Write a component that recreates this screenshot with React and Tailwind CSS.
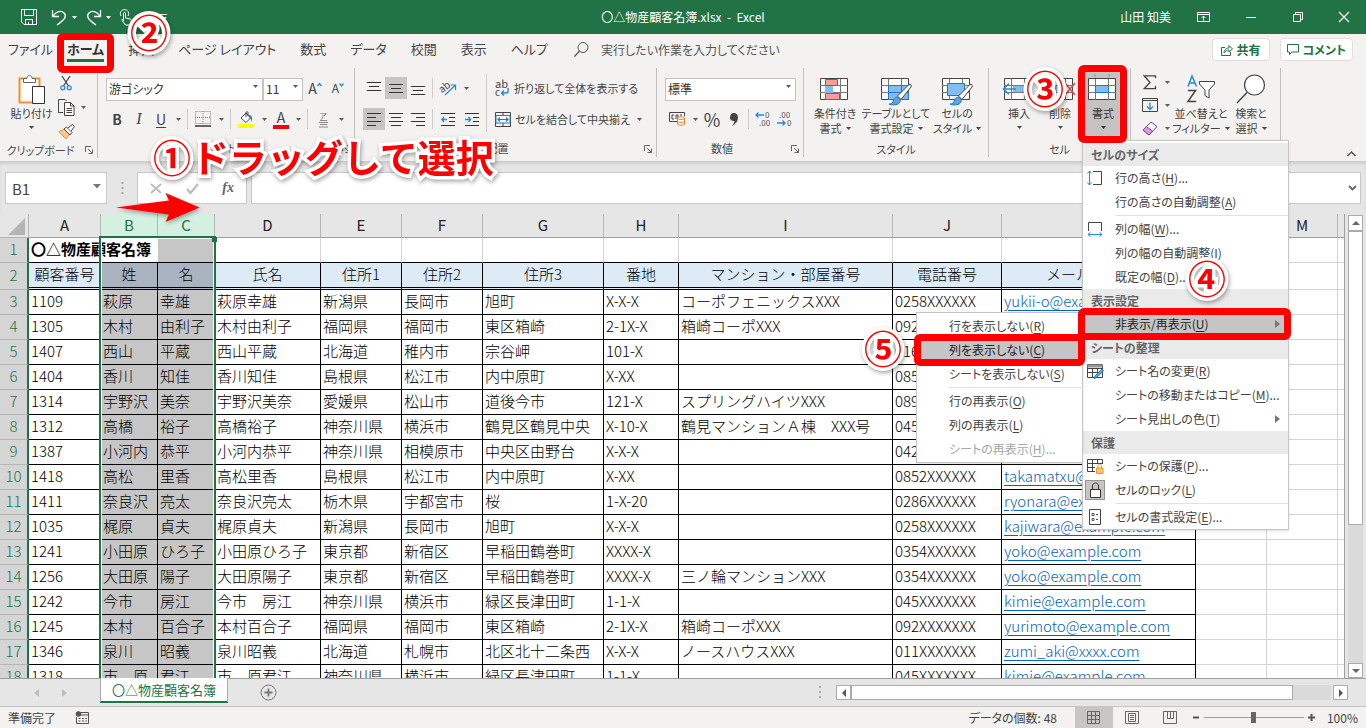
// src/App.jsx
import React, { useState } from 'react'
import clsx from 'clsx'

const TABS = ['ファイル', 'ホーム', '挿入', 'ページ レイアウト', '数式', 'データ', '校閲', '表示', 'ヘルプ'];

const COLUMNS = [
  { id: 'A', width: 72 },
  { id: 'B', width: 57 },
  { id: 'C', width: 57 },
  { id: 'D', width: 106 },
  { id: 'E', width: 81 },
  { id: 'F', width: 81 },
  { id: 'G', width: 121 },
  { id: 'H', width: 75 },
  { id: 'I', width: 214 },
  { id: 'J', width: 109 },
  { id: 'K', width: 194 },
  { id: 'L', width: 71 },
  { id: 'M', width: 71 },
  { id: '', width: null },
];

const HEADINGS = ['顧客番号', '姓', '名', '氏名', '住所1', '住所2', '住所3', '番地', 'マンション・部屋番号', '電話番号', 'メールアドレス'];

const CUSTOMERS = [
  ['1109', '萩原', '幸雄', '萩原幸雄', '新潟県', '長岡市', '旭町', 'X-X-X', 'コーポフェニックスXXX', '0258XXXXXX', 'yukii-o@example.com'],
  ['1305', '木村', '由利子', '木村由利子', '福岡県', '福岡市', '東区箱崎', '2-1X-X', '箱崎コーポXXX', '092XXXXXXX', ''],
  ['1407', '西山', '平蔵', '西山平蔵', '北海道', '稚内市', '宗谷岬', '101-X', '', '016XXXXXXX', ''],
  ['1404', '香川', '知佳', '香川知佳', '島根県', '松江市', '内中原町', 'X-XX', '', '0852XXXXXX', ''],
  ['1314', '宇野沢', '美奈', '宇野沢美奈', '愛媛県', '松山市', '道後今市', '121-X', 'スプリングハイツXXX', '089XXXXXXX', ''],
  ['1312', '高橋', '裕子', '高橋裕子', '神奈川県', '横浜市', '鶴見区鶴見中央', 'X-10-X', '鶴見マンションＡ棟　XXX号', '045XXXXXXX', ''],
  ['1387', '小河内', '恭平', '小河内恭平', '神奈川県', '相模原市', '中央区由野台', 'X-X-X', '', '042XXXXXXX', ''],
  ['1418', '高松', '里香', '高松里香', '島根県', '松江市', '内中原町', 'X-XX', '', '0852XXXXXX', 'takamatxu@example.com'],
  ['1411', '奈良沢', '亮太', '奈良沢亮太', '栃木県', '宇都宮市', '桜', '1-X-20', '', '0286XXXXXX', 'ryonara@example.com'],
  ['1035', '梶原', '貞夫', '梶原貞夫', '新潟県', '長岡市', '旭町', 'X-X-X', '', '0258XXXXXX', 'kajiwara@example.com'],
  ['1241', '小田原', 'ひろ子', '小田原ひろ子', '東京都', '新宿区', '早稲田鶴巻町', 'XXXX-X', '', '0354XXXXXX', 'yoko@example.com'],
  ['1256', '大田原', '陽子', '大田原陽子', '東京都', '新宿区', '早稲田鶴巻町', 'XXXX-X', '三ノ輪マンションXXX', '0354XXXXXX', 'yoko@example.com'],
  ['1242', '今市', '房江', '今市　房江', '神奈川県', '横浜市', '緑区長津田町', '1-1-X', '', '045XXXXXXX', 'kimie@example.com'],
  ['1245', '本村', '百合子', '本村百合子', '福岡県', '福岡市', '東区箱崎', '2-1X-X', '箱崎コーポXXX', '092XXXXXXX', 'yurimoto@example.com'],
  ['1346', '泉川', '昭義', '泉川昭義', '北海道', '札幌市', '北区北十二条西', 'X-X-X', 'ノースハウスXXX', '011XXXXXXX', 'zumi_aki@xxxx.com'],
  ['1318', '市　原', '君江', '市　原君江', '神奈川県', '横浜市', '緑区長津田町', '1-1-X', '', '045XXXXXXX', 'kimie@example.com'],
];

/* ---------- small helpers ---------- */

function Svg({ w, h, children, className }) {
  return (
    <svg width={w} height={h} viewBox={`0 0 ${w} ${h}`} fill="none" aria-hidden="true" className={clsx('shrink-0 overflow-visible', className)}>
      {children}
    </svg>
  );
}

function Caret({ className }) {
  return (
    <Svg w={5} h={3} className={className}>
      <path d="M0 0h5L2.5 3z" fill="currentColor" />
    </Svg>
  );
}

function Drop({ label }) {
  return (
    <button type="button" aria-label={label} className="w-3 h-[22px] flex items-center justify-center text-[#5a5a5a]">
      <Caret />
    </button>
  );
}

function Tool({ label, active, wide, children }) {
  return (
    <button
      type="button"
      aria-label={label}
      className={clsx('h-[22px] flex items-center justify-center shrink-0', wide ? 'w-6' : 'w-[22px]', active && 'bg-[#c8c6c4]')}
    >
      {children}
    </button>
  );
}

function Sep() {
  return <span className="w-px h-5 mx-[3px] bg-[#d0cecc]" />;
}

function Big({ icon, lines, className, caretBelow }) {
  return (
    <button type="button" className={clsx('h-[68px] flex flex-col items-center text-[11px] leading-[15px] whitespace-nowrap', className)}>
      <span className="h-[34px] flex items-center">{icon}</span>
      <span>{lines[0]}</span>
      {caretBelow ? (
        <span className="h-3 flex items-center"><Caret /></span>
      ) : (
        <span className="flex items-center gap-1">{lines[1]}<Caret /></span>
      )}
    </button>
  );
}

function Group({ label, launcher, className, children }) {
  return (
    <section aria-label={label} className={clsx('shrink-0 h-[93px] flex flex-col', className)}>
      <div className="flex-1 flex border-r border-[#c2c0be] pt-1">{children}</div>
      <div className={clsx('h-[18px] relative flex items-center justify-center text-[11px] text-[#4a4a4a] border-r border-[#c2c0be] mb-1 leading-4', launcher && 'pr-4')}>
        {label}
        {launcher && (
          <button type="button" aria-label={`${label}の設定`} className="absolute right-1 bottom-1">
            <Svg w={8} h={8}>
              <path d="M.5 6V.5H6M3 3l4 4M7.5 3.5v4h-4" stroke="#666" />
            </Svg>
          </button>
        )}
      </div>
    </section>
  );
}

function Frame({ className }) {
  return <span className={clsx('absolute border-[7px] border-[#ff0000] rounded-md pointer-events-none z-20', className)} />;
}

function Callout({ className, children }) {
  return (
    <span
      className={clsx(
        "absolute z-40 text-[38px] leading-[38px] font-bold text-[#ff0000] whitespace-nowrap pointer-events-none font-['Noto_Sans_CJK_JP',sans-serif] [font-feature-settings:normal] [-webkit-text-stroke:7px_white] [paint-order:stroke_fill] [filter:drop-shadow(1px_2px_2px_rgba(0,0,0,0.35))]",
        className
      )}
    >
      {children}
    </span>
  );
}

/* ---------- icons ---------- */

function Lines({ rows }) {
  return (
    <Svg w={14} h={13}>
      {rows.map(([y, x1, x2]) => (
        <path key={y} d={`M${x1} ${y}H${x2}`} stroke="#333" />
      ))}
    </Svg>
  );
}

function GridIcon({ children }) {
  return (
    <Svg w={32} h={30}>
      <path d="M1.5 4.500h27v21h-27z" fill="#fff" stroke="#444" />
      <path d="M1 11.500h28M1 18.500h28M8.500 5v21M21.500 5v21" stroke="#777" />
      {children}
    </Svg>
  );
}

const Brush = () => (
  <>
    <path d="M29 10.500L17.500 22l3.500 3.500L31 13c1-1.500-.5-3.500-2-2.500z" fill="#fff" stroke="#444" />
    <path d="M9 30c3 .5 4-2 4.500-4s3-4 5.500-2 1 5-1 6-6 1.500-9 0z" fill="#5ba5dc" stroke="#1e7ac4" />
  </>
);

const PasteIcon = () => (
  <Svg w={28} h={30}>
    <path d="M1.500 4.500h20v24h-20z" fill="#fdf3e6" stroke="#e8953a" strokeWidth="2" />
    <path d="M4.500 7.500h14v18h-14z" fill="#fff" />
    <path d="M5.500 8.500v-4h3.500c0-4 5-4 5 0h3.500v4z" fill="#fff" stroke="#666" />
    <path d="M14.500 12.500h12v17h-12z" fill="#fff" stroke="#333" />
  </Svg>
);

const CutIcon = () => (
  <Svg w={12} h={16}>
    <path d="M2 1l6.500 10M10 1L3.500 11" stroke="#444" strokeWidth="1.300" />
    <circle cx="2.800" cy="12.800" r="2" stroke="#2b88d8" strokeWidth="1.300" />
    <circle cx="9.200" cy="12.800" r="2" stroke="#2b88d8" strokeWidth="1.300" />
  </Svg>
);

const CopyIcon = () => (
  <Svg w={17} h={17}>
    <path d="M5 13.500H.500V.500h6.500L8.500 2" stroke="#444" />
    <path d="M6.500 3.500h6l3.500 3.500v9.500H6.500z" fill="#fff" stroke="#444" />
    <path d="M12.500 3.500V7H16M8.500 9.500H14M8.500 11.500H14M8.500 13.500H14" stroke="#444" />
  </Svg>
);

const PainterIcon = () => (
  <Svg w={17} h={15}>
    <path d="M.8 7.500l6-2.500 5 5-4 5z" fill="#fbc98a" stroke="#e8953a" />
    <path d="M6 5l2.500-2 5.500 5.500-2 2.500z" fill="#fff" stroke="#444" />
    <path d="M10 4l4.500-3.500 2 2L13 7" fill="#fff" stroke="#444" />
  </Svg>
);

const BorderIcon = () => (
  <Svg w={16} h={16}>
    <path d="M.5 .5h15v12H.5zM8 0v13M0 6.500h16" stroke="#888" strokeDasharray="1 1" />
    <path d="M0 15h16" stroke="#333" strokeWidth="1.500" />
  </Svg>
);

const FillIcon = () => (
  <Svg w={16} h={17}>
    <path d="M3 7l5-5 4.500 5L8 11.500z" fill="#fff" stroke="#444" />
    <path d="M8 6V1.500c0-1 2-1 2 0V5" stroke="#444" />
    <path d="M11 4c3 0 3.500 3 3 7-1-2-1-3.500-3-5z" fill="#1e7ac4" />
    <path d="M0 13h16v4H0z" fill="#ffff00" />
  </Svg>
);

const OrientIcon = () => (
  <Svg w={18} h={16}>
    <text x="0" y="11" fontSize="10" fill="#444" transform="rotate(-40 5 8)">ab</text>
    <path d="M6 15L16 5.500M11.500 5H16.500V10" stroke="#2b88d8" strokeWidth="1.200" />
  </Svg>
);

const IndentIcon = ({ out }) => (
  <Svg w={15} h={13}>
    <path d="M0 .5h14M8 4.500h6M8 8.500h6M0 12.500h14" stroke="#333" />
    <path d={out ? 'M6 6.500H1M3 4L.8 6.500 3 9' : 'M0 6.500h5.500M3.500 4l2.200 2.500L3.500 9'} stroke="#2b88d8" strokeWidth="1.300" />
  </Svg>
);

const WrapIcon = () => (
  <Svg w={15} h={16}>
    <text x="0" y="8" fontSize="11" fill="#444">ab</text>
    <text x="0" y="16" fontSize="10" fill="#444">c</text>
    <path d="M13 8v3.500c0 1-1 1.500-2 1.500H7M9 10.500L6.500 13 9 15.500" stroke="#2b88d8" strokeWidth="1.400" />
  </Svg>
);

const MergeIcon = () => (
  <Svg w={16} h={15}>
    <path d="M.5 .5h15v14H.5zM8 0v4M8 11v4" stroke="#444" />
    <path d="M1 3.500h14v7.500H1z" fill="#fff" stroke="#1e7ac4" />
    <path d="M3 7.500h10M5 5.500L3 7.500l2 2M11 5.500l2 2-2 2" stroke="#1e7ac4" strokeWidth="1.200" />
  </Svg>
);

const CurrencyIcon = () => (
  <Svg w={17} h={14}>
    <path d="M9 9.500H.5v-9h15V4" stroke="#444" />
    <path d="M5 3H3v4h2M7 7V3h2v3M11 3h2" stroke="#444" />
    <path d="M8.500 6c0-1.500 7-1.500 7 0v6c0 1.500-7 1.500-7 0z" fill="#fff" stroke="#e8792a" />
    <path d="M8.500 6.500c0 1.200 7 1.200 7 0M8.500 9.500c0 1.200 7 1.200 7 0" stroke="#e8792a" />
  </Svg>
);

const DecimalIcon = ({ less }) => (
  <Svg w={17} h={16}>
    <text x={less ? 2 : 10} y="7" fontSize="8" fill="#555">{less ? '.00' : '0'}</text>
    <text x={less ? 10 : 4} y="15" fontSize="8" fill="#555">{less ? '0' : '.00'}</text>
    <path d={less ? 'M0 12h8M5.500 9.500L8 12l-2.500 2.500' : 'M9 4H1M3.500 1.500L1 4l2.500 2.500'} stroke="#2b88d8" strokeWidth="1.300" />
  </Svg>
);

const CondIcon = () => (
  <GridIcon>
    <path d="M6.500 5.500h12v6h-12zM6.500 19.500h14v6h-14z" fill="#ff9a9a" stroke="#d83b3b" />
    <path d="M6 12h8v7H6z" fill="#83bdf0" />
  </GridIcon>
);

const InsertIcon = () => (
  <GridIcon>
    <path d="M10 12h19v6H10z" fill="#83bdf0" />
    <path d="M13 15H1M6 9.500L.5 15 6 20.500" stroke="#2b88d8" strokeWidth="1.500" />
  </GridIcon>
);

const DeleteIcon = () => (
  <GridIcon>
    <path d="M1 12h12v6H1z" fill="#83bdf0" />
    <path d="M21 9l10 12M31 9L21 21" stroke="#e04848" strokeWidth="1.500" />
  </GridIcon>
);

const FormatIcon = () => (
  <GridIcon>
    <path d="M8.500 11.500h13v7h-13z" fill="#83bdf0" stroke="#1e7ac4" />
    <path d="M8 .5v2M22 .5v2" stroke="#2b88d8" />
  </GridIcon>
);

const SumIcon = () => (
  <Svg w={14} h={15}>
    <path d="M12.500 3V.8H1.200L7 7.500l-5.800 6.200h11.300V11" stroke="#444" strokeWidth="1.300" />
  </Svg>
);

const FillDownIcon = () => (
  <Svg w={16} h={14}>
    <path d="M.5 .5h15v13H.5zM0 2.500h16" stroke="#444" />
    <path d="M8 4.500v7M5 8.500l3 3 3-3" stroke="#2b88d8" strokeWidth="1.300" />
  </Svg>
);

const EraserIcon = () => (
  <Svg w={16} h={15}>
    <path d="M1 9l8-8 6 4.500-8 8.500z" fill="#fff" stroke="#8a3c9c" />
    <path d="M1 9l3.500-3.500 6 4.500L7 14z" fill="#d9a0e0" stroke="#8a3c9c" />
  </Svg>
);

const SortIcon = () => (
  <Svg w={30} h={30}>
    <path d="M2 12.500L6 2l4.500 10.500M3.500 9h5.500" stroke="#2b88d8" strokeWidth="1.500" />
    <path d="M2 16.500h7.500L2 27.500h8" stroke="#444" strokeWidth="1.500" />
    <path d="M13.500 7.500h15v2.500l-5.500 6v8l-4-2.500V16l-5.500-6z" fill="#fff" stroke="#444" />
  </Svg>
);

const FindIcon = () => (
  <Svg w={30} h={30}>
    <circle cx="18.500" cy="11" r="10" fill="#fff" stroke="#444" strokeWidth="1.200" />
    <path d="M11 18.500L1 29" stroke="#444" strokeWidth="1.400" />
  </Svg>
);

const RowHeightIcon = () => (
  <Svg w={16} h={16}>
    <path d="M6 1.500h8.500v13H6" stroke="#444" />
    <path d="M2.500 1v14M.3 3.500L2.500 1l2.200 2.500M.3 12.500L2.500 15l2.200-2.500" stroke="#2b88d8" />
  </Svg>
);

const ColWidthIcon = () => (
  <Svg w={16} h={16}>
    <path d="M1.500 10V1.500h13V10" stroke="#444" />
    <path d="M1 13.500h14M3.500 11.300L1 13.500l2.500 2.200M12.500 11.300l2.500 2.200-2.500 2.200" stroke="#2b88d8" />
  </Svg>
);

const RenameIcon = () => (
  <Svg w={17} h={16}>
    <path d="M.5 1.500h15v13H.5zM0 5.500h16M0 9.500h16M5.500 5v10M10.500 5v10" stroke="#444" />
    <path d="M.5 1.500h15v3H.5z" fill="#999" />
    <path d="M15 6l-7 7-1 2.500 2.500-1L16.500 8z" fill="#5ba5dc" stroke="#1e7ac4" />
  </Svg>
);

const ProtectIcon = () => (
  <Svg w={17} h={16}>
    <path d="M8 13.500H.5V1.500h15V6M0 5.500h16M0 9.500h8M5.500 1v13M10.500 1v5" stroke="#444" />
    <path d="M9.500 10h6.500v5.500H9.500z" fill="#ffc766" stroke="#e8953a" />
    <path d="M11 10V8c0-2 3.500-2 3.500 0v2" stroke="#e8953a" />
  </Svg>
);

const LockIcon = () => (
  <span className="w-5 h-5 shrink-0 bg-[#c8c6c4] border border-[#979593] flex items-center justify-center">
    <Svg w={13} h={16}>
      <path d="M1.500 7.500h10v8h-10z" fill="#fff" stroke="#333" />
      <path d="M3.500 7.500V4c0-4 6-4 6 0v3.500" stroke="#333" />
    </Svg>
  </span>
);

const CellFormatIcon = () => (
  <Svg w={12} h={16}>
    <path d="M.5 .5h11v15H.5z" fill="#fff" stroke="#444" />
    <path d="M3 4.500h2v2H3zM3 9.500h2v2H3zM7 5.500h2M7 10.500h2" stroke="#555" />
  </Svg>
);

/* ---------- menus ---------- */

function MenuHeader({ children }) {
  return <li role="presentation" className="h-[23px] bg-[#eaeaea] px-2 flex items-center font-bold text-[#666]">{children}</li>;
}

function MenuItem({ icon, text, hotkey, dots, more, active, disabled, children }) {
  return (
    <li role="none" className="relative">
      <button
        type="button"
        role="menuitem"
        disabled={disabled}
        className={clsx(
          'w-full h-6 flex items-center text-left whitespace-nowrap',
          active ? 'bg-[#c5c5c5] text-[#222]' : disabled ? 'text-[#a5a5a5]' : 'text-[#444]'
        )}
      >
        <span className="w-8 shrink-0 flex justify-center pr-2">{icon}</span>
        <span className="flex-1">{text}(<span className="underline underline-offset-2">{hotkey}</span>){dots && '...'}</span>
        {more && (
          <Svg w={5} h={8} className="mr-2"><path d="M0 0l5 4-5 4z" fill="#777" /></Svg>
        )}
      </button>
      {children}
    </li>
  );
}

const MenuSep = () => <li role="separator" className="h-px my-px ml-8 bg-[#e1e1e1]" />;

function HideMenu() {
  return (
    <ul role="menu" className="absolute right-full top-0 w-[167px] py-px bg-white border border-[#c6c6c6] shadow">
      <MenuItem text="行を表示しない" hotkey="R" />
      <MenuItem text="列を表示しない" hotkey="C" active>
        <Frame className="-left-[3px] -right-[3px] -top-1 -bottom-1" />
      </MenuItem>
      <MenuItem text="シートを表示しない" hotkey="S" />
      <MenuSep />
      <MenuItem text="行の再表示" hotkey="O" />
      <MenuItem text="列の再表示" hotkey="L" />
      <MenuItem text="シートの再表示" hotkey="H" dots disabled />
    </ul>
  );
}

function FormatMenu() {
  return (
    <ul role="menu" className="absolute z-30 top-[68px] -left-[3px] w-[207px] pt-0.5 bg-white border border-[#c6c6c6] shadow text-xs">
      <MenuHeader>セルのサイズ</MenuHeader>
      <MenuItem icon={<RowHeightIcon />} text="行の高さ" hotkey="H" dots />
      <MenuItem text="行の高さの自動調整" hotkey="A" />
      <MenuSep />
      <MenuItem icon={<ColWidthIcon />} text="列の幅" hotkey="W" dots />
      <MenuItem text="列の幅の自動調整" hotkey="I" />
      <MenuItem text="既定の幅" hotkey="D" dots />
      <MenuHeader>表示設定</MenuHeader>
      <MenuItem text="非表示/再表示" hotkey="U" more active>
        <HideMenu />
        <Frame className="-left-[5px] -right-[3px] -top-1 -bottom-1" />
      </MenuItem>
      <MenuHeader>シートの整理</MenuHeader>
      <MenuItem icon={<RenameIcon />} text="シート名の変更" hotkey="R" />
      <MenuItem text="シートの移動またはコピー" hotkey="M" dots />
      <MenuItem text="シート見出しの色" hotkey="T" more />
      <MenuHeader>保護</MenuHeader>
      <MenuItem icon={<ProtectIcon />} text="シートの保護" hotkey="P" dots />
      <MenuItem icon={<LockIcon />} text="セルのロック" hotkey="L" />
      <MenuSep />
      <MenuItem icon={<CellFormatIcon />} text="セルの書式設定" hotkey="E" dots />
    </ul>
  );
}

/* ---------- window parts ---------- */

function TitleBar() {
  return (
    <header className="h-[34px] shrink-0 bg-[#217346] text-white text-xs flex items-center relative">
      <div className="flex items-center pl-[21px]">
        <button type="button" aria-label="上書き保存">
          <Svg w={16} h={16}>
            <path d="M.5 .5h15v15H3L.5 13zM3.500 1v5.500h9V1M4.500 15.500v-5h7v5M7.500 15v-2" stroke="#fff" />
          </Svg>
        </button>
        <button type="button" aria-label="元に戻す" className="ml-3.5 flex items-center gap-1">
          <Svg w={17} h={17}>
            <path d="M1.500 1v6.500H8M2 7C5 2.500 10 1 13 4s1.500 6-7 12" stroke="#fff" strokeWidth="1.300" />
          </Svg>
          <Caret />
        </button>
        <button type="button" aria-label="やり直し" className="ml-2 flex items-center gap-1">
          <Svg w={17} h={17}>
            <path d="M15.500 1v6.500H9M15 7C12 2.500 7 1 4 4s-1.500 6 7 12" stroke="#fff" strokeWidth="1.300" />
          </Svg>
          <Caret />
        </button>
        <button type="button" aria-label="タッチ/マウス モードの切り替え" className="ml-2">
          <Svg w={14} h={17}>
            <path d="M4.500 12V4.500c0-1.500 2-1.500 2 0V9l4.500 1c1 .3 1.500 1 1.300 2l-.8 4H6.500L3 11.500c-.5-1 .5-1.500 1.500-.5M2 7C0 3 3 .6 5.500.6S11 3 9 7" stroke="#fff" />
          </Svg>
        </button>
        <button type="button" aria-label="クイック アクセス ツール バーのカスタマイズ" className="ml-[26px]">
          <Svg w={8} h={7}><path d="M0 .5h8M1 3.500h6L4 7z" stroke="#fff" fill="#fff" /></Svg>
        </button>
      </div>
      <h1 className="absolute inset-x-0 text-center whitespace-pre pointer-events-none [font-feature-settings:normal]">〇△物産顧客名簿.xlsx  -  Excel</h1>
      <div className="ml-auto flex items-center pr-[17px]">
        <span className="mr-[26px]">山田 知美</span>
        <button type="button" aria-label="リボンの表示オプション" className="mr-9">
          <Svg w={13} h={10}><path d="M.5 .5h12v9H.5zM0 2.500h13M6.500 8.500V4.500M4.500 6l2-2 2 2" stroke="#fff" /></Svg>
        </button>
        <button type="button" aria-label="最小化" className="mr-9">
          <Svg w={11} h={10}><path d="M0 5.500h10" stroke="#fff" /></Svg>
        </button>
        <button type="button" aria-label="元のサイズに戻す" className="mr-9">
          <Svg w={10} h={10}><path d="M.5 2.500h7v7h-7zM2.500 2V.5h7v7H8" stroke="#fff" /></Svg>
        </button>
        <button type="button" aria-label="閉じる">
          <Svg w={10} h={10}><path d="M0 0l10 10M10 0L0 10" stroke="#fff" strokeWidth="1.100" /></Svg>
        </button>
      </div>
    </header>
  );
}

function RibbonTabs() {
  const [active, setActive] = useState('ホーム');

  return (
    <nav className="h-[34px] shrink-0 flex items-start text-[13px] leading-[30px] text-[#444] pr-[13px]">
      <div className="flex">
        {TABS.map((tab) => (
          <button
            key={tab}
            type="button"
            onClick={() => setActive(tab)}
            className={clsx('relative whitespace-nowrap', tab === 'ファイル' ? 'pl-2 pr-0.5' : 'px-3', tab === active && 'font-bold text-[#333]')}
          >
            {tab}
            {tab === active && <span className="absolute left-3 right-3 bottom-0.5 h-[3px] bg-[#217346]" />}
            {tab === 'ホーム' && <Frame className="left-0.5 right-0.5 -top-px -bottom-[9px]" />}
          </button>
        ))}
      </div>
      <label className="ml-3.5 flex items-center gap-3">
        <Svg w={15} h={15}>
          <circle cx="9" cy="5.500" r="5" stroke="#555" />
          <path d="M5.500 9L.5 14.500" stroke="#555" strokeWidth="1.200" />
        </Svg>
        <input placeholder="実行したい作業を入力してください" aria-label="操作アシスト" className="w-[220px] h-[30px] bg-transparent outline-none text-xs placeholder:text-[#555] [font-feature-settings:'palt']" />
      </label>
      <div className="ml-auto mt-1 flex gap-2.5 font-bold text-xs text-[#217346]">
        <button type="button" className="h-[23px] px-2 bg-white border border-[#e1dfdd] rounded-sm flex items-center gap-1">
          <Svg w={12} h={12}>
            <path d="M4 3.500H.5v8h9V8M3 9c0-4 3-5 5-5V1.500L11.500 5 8 8V6C6 6 4 7 3 9z" stroke="#217346" />
          </Svg>
          共有
        </button>
        <button type="button" className="h-[23px] px-1.5 bg-white border border-[#e1dfdd] rounded-sm flex items-center gap-1">
          <Svg w={12} h={12}><path d="M.5 .5h11v7.500H5L2.500 10.500V8h-2z" stroke="#217346" /></Svg>
          コメント
        </button>
      </div>
    </nav>
  );
}

function SelectBox({ label, value, className }) {
  return (
    <div className={clsx('relative shrink-0', className)}>
      <select aria-label={label} defaultValue={value} className="w-full h-[23px] appearance-none bg-white border border-[#c6c4c2] px-0.5 text-xs text-[#333]">
        <option>{value}</option>
      </select>
      <Caret className="absolute right-[5px] top-[10px] text-[#5a5a5a] pointer-events-none" />
    </div>
  );
}

function Ribbon() {
  return (
    <div className="h-[93px] shrink-0 flex text-[#444] relative z-10">
      <Group label="クリップボード" launcher className="w-[98px]">
        <Big icon={<PasteIcon />} lines={['貼り付け']} caretBelow className="ml-2 w-[47px]" />
        <div className="flex flex-col gap-0.5">
          <Tool label="切り取り"><CutIcon /></Tool>
          <div className="flex"><Tool label="コピー"><CopyIcon /></Tool><Drop label="コピーのオプション" /></div>
          <Tool label="書式のコピー/貼り付け"><PainterIcon /></Tool>
        </div>
      </Group>

      <Group label="フォント" launcher className="w-[257px]">
        <div className="pl-2 pt-1 flex flex-col gap-2">
          <div className="flex items-center h-6">
            <SelectBox label="フォント" value="游ゴシック" className="w-[157px]" />
            <SelectBox label="フォント サイズ" value="11" className="w-10" />
            <Tool label="フォント サイズの拡大" wide>
              <span className="text-sm">A</span><Svg w={5} h={12}><path d="M.5 4l2-2.500 2 2.500" stroke="#2b88d8" strokeWidth="1.300" /></Svg>
            </Tool>
            <Tool label="フォント サイズの縮小">
              <span className="text-xs">A</span><Svg w={5} h={12}><path d="M.5 1.500l2 2.500 2-2.500" stroke="#2b88d8" strokeWidth="1.300" /></Svg>
            </Tool>
          </div>
          <div className="flex items-center text-sm">
            <Tool label="太字"><b>B</b></Tool>
            <Tool label="斜体"><i className="font-['Liberation_Serif',serif] text-base">I</i></Tool>
            <Tool label="下線"><u className="underline-offset-2">U</u></Tool>
            <Drop label="下線のオプション" />
            <Sep />
            <Tool label="罫線" wide><BorderIcon /></Tool>
            <Drop label="罫線のオプション" />
            <Sep />
            <Tool label="塗りつぶしの色" wide><FillIcon /></Tool>
            <Drop label="塗りつぶしのオプション" />
            <Tool label="フォントの色"><span className="w-4 leading-[15px] border-b-4 border-[#ff0000]">A</span></Tool>
            <Drop label="フォントの色のオプション" />
            <Sep />
            <Tool label="ふりがな" wide>
              <span className="flex flex-col items-center text-[#777]">
                <span className="text-[8px] leading-[9px]">ア</span>
                <Svg w={9} h={8}><path d="M1 .5h7M0 2.500h9M1 4.500h7M0 7h9" stroke="#888" /></Svg>
              </span>
            </Tool>
            <Drop label="ふりがなのオプション" />
          </div>
        </div>
      </Group>

      <Group label="配置" launcher className="w-[302px]">
        <div className="pl-2 pt-1 flex flex-col gap-2">
          <div className="flex items-center h-6">
            <Tool label="上揃え"><Lines rows={[[0.5, 0, 14], [4.5, 2, 12], [8.5, 0, 14]]} /></Tool>
            <Tool label="上下中央揃え" active><Lines rows={[[2.5, 0, 14], [6.5, 2, 12], [10.5, 0, 14]]} /></Tool>
            <Tool label="下揃え"><Lines rows={[[4.5, 0, 14], [8.5, 2, 12], [12.5, 0, 14]]} /></Tool>
            <Sep />
            <Tool label="方向" wide><OrientIcon /></Tool>
            <Drop label="方向のオプション" />
          </div>
          <div className="flex items-center">
            <Tool label="左揃え" active><Lines rows={[[0.5, 0, 14], [4.5, 0, 9], [8.5, 0, 14], [12.5, 0, 9]]} /></Tool>
            <Tool label="中央揃え"><Lines rows={[[0.5, 0, 14], [4.5, 2, 12], [8.5, 0, 14], [12.5, 2, 12]]} /></Tool>
            <Tool label="右揃え"><Lines rows={[[0.5, 0, 14], [4.5, 5, 14], [8.5, 0, 14], [12.5, 5, 14]]} /></Tool>
            <Sep />
            <Tool label="インデントを減らす" wide><IndentIcon out /></Tool>
            <Tool label="インデントを増やす" wide><IndentIcon /></Tool>
          </div>
        </div>
        <span className="w-px h-[58px] mt-0.5 ml-0.5 bg-[#d0cecc]" />
        <div className="pl-2 pt-1 flex flex-col gap-2 text-[11px] whitespace-nowrap">
          <button type="button" className="h-6 flex items-center gap-1"><WrapIcon />折り返して全体を表示する</button>
          <div className="h-[22px] flex items-center">
            <button type="button" className="flex items-center gap-1"><MergeIcon />セルを結合して中央揃え</button>
            <span className="ml-1 flex"><Drop label="結合のオプション" /></span>
          </div>
        </div>
      </Group>

      <Group label="数値" launcher className="w-[147px]">
        <div className="pl-2 pt-1 flex flex-col gap-2">
          <div className="h-6 flex items-center"><SelectBox label="数値の書式" value="標準" className="w-[131px]" /></div>
          <div className="flex items-center">
            <Tool label="通貨表示形式" wide><CurrencyIcon /></Tool>
            <Drop label="通貨のオプション" />
            <Tool label="パーセント スタイル"><span className="text-lg">%</span></Tool>
            <Tool label="桁区切りスタイル">
              <Svg w={8} h={13}><path d="M4 0C6.500 0 8 2 8 4.500 8 8 6 11 2 13c2-2.500 2.500-4 2.500-5C2 8.500 0 7 0 4.500 0 2 1.500 0 4 0z" fill="#444" /></Svg>
            </Tool>
            <Sep />
            <Tool label="小数点以下の表示桁数を増やす"><DecimalIcon /></Tool>
            <Tool label="小数点以下の表示桁数を減らす"><DecimalIcon less /></Tool>
          </div>
        </div>
      </Group>

      <Group label="スタイル" className="w-[185px]">
        <Big icon={<CondIcon />} lines={['条件付き', '書式']} className="ml-1.5 w-[50px]" />
        <Big
          icon={<GridIcon><path d="M8.500 11.500h20v14h-20z" fill="#83bdf0" stroke="#1e7ac4" /><path d="M9 18.500h19M21.500 12v13" stroke="#1e7ac4" /><Brush /></GridIcon>}
          lines={['テーブルとして', '書式設定']}
          className="w-[72px]"
        />
        <Big
          icon={<GridIcon><path d="M6.500 9.500h17v12h-17z" fill="#83bdf0" stroke="#1e7ac4" /><Brush /></GridIcon>}
          lines={['セルの', 'スタイル']}
          className="w-[50px]"
        />
      </Group>

      <Group label="セル" className="w-[142px]">
        <Big icon={<InsertIcon />} lines={['挿入']} caretBelow className="ml-2.5 w-10" />
        <Big icon={<DeleteIcon />} lines={['削除']} caretBelow className="w-[42px]" />
        <div className="relative ml-1 h-16">
          <div className="bg-[#c5c3c1] text-[#333]">
            <Big icon={<FormatIcon />} lines={['書式']} caretBelow className="w-9" />
          </div>
          <FormatMenu />
          <Frame className="-left-[7px] -right-[6px] -top-[7px] -bottom-[7px] z-30" />
        </div>
      </Group>

      <Group label="編集" className="w-[150px]">
        <div className="ml-2 flex flex-col gap-px -mt-px">
          <div className="flex"><Tool label="オート SUM"><SumIcon /></Tool><Drop label="オート SUM のオプション" /></div>
          <div className="flex"><Tool label="フィル"><FillDownIcon /></Tool><Drop label="フィルのオプション" /></div>
          <div className="flex"><Tool label="クリア"><EraserIcon /></Tool><Drop label="クリアのオプション" /></div>
        </div>
        <Big icon={<SortIcon />} lines={['並べ替えと', 'フィルター']} className="w-14" />
        <Big icon={<FindIcon />} lines={['検索と', '選択']} className="w-11" />
      </Group>

      <button type="button" aria-label="リボンを折りたたむ" className="ml-auto mr-2.5 mt-[82px] h-2">
        <Svg w={9} h={6}><path d="M.5 5l4-4 4 4" stroke="#555" strokeWidth="1.500" /></Svg>
      </button>
    </div>
  );
}

function FormulaBar() {
  return (
    <div className="h-[53px] shrink-0 flex items-start pt-[11px] pl-[5px] pr-[5px] shadow-[inset_0_4px_4px_-2px_rgba(0,0,0,0.15)]">
      <div className="relative w-[102px]">
        <input defaultValue="B1" aria-label="名前ボックス" className="w-full h-8 px-1.5 bg-white border border-[#c8c8c8] text-[15px] text-[#444]" />
        <Svg w={8} h={5} className="absolute right-1.5 top-3"><path d="M0 0h8L4 4.500z" fill="#777" /></Svg>
      </div>
      <Svg w={30} h={32}>
        <path d="M15.500 10v2M15.500 15v2M15.500 20v2" stroke="#aaa" strokeWidth="2" />
      </Svg>
      <div className="w-[110px] h-8 bg-white border border-[#c8c8c8] flex items-center justify-between pl-3 pr-3">
        <button type="button" aria-label="キャンセル"><Svg w={12} h={11}><path d="M1 1l10 9M11 1L1 10" stroke="#bbb" strokeWidth="1.800" /></Svg></button>
        <button type="button" aria-label="入力"><Svg w={13} h={11}><path d="M1 6l3.500 4L12 1" stroke="#bbb" strokeWidth="2.200" /></Svg></button>
        <button type="button" aria-label="関数の挿入" className="font-['Liberation_Serif',serif] italic font-bold text-sm text-[#666]">fx</button>
      </div>
      <div className="relative flex-1 ml-1">
        <input aria-label="数式バー" className="w-full h-8 px-2 bg-white border border-[#c8c8c8]" />
        <Svg w={9} h={6} className="absolute right-1 top-[13px]"><path d="M1 1l3.500 3.500L8 1" stroke="#666" strokeWidth="1.800" /></Svg>
      </div>
    </div>
  );
}

const isSelected = (col) => col === 1 || col === 2;

function SheetRow({ number, cells, kind }) {
  return (
    <tr className={kind === 'heading' ? 'h-[27px]' : 'h-[25px]'}>
      <th scope="row" className="p-0 pb-0.5 bg-[#d5d5d5] text-[#217346] font-light text-center border-r-2 border-r-[#217346] border-b border-b-[#b5b5b5]">
        {number}
      </th>
      {COLUMNS.map((col, i) => {
        const inside = i < 11;
        const text = cells[i] || '';
        return (
          <td
            key={i}
            className={clsx(
              'p-0 pb-0.5 pl-0.5 whitespace-nowrap border-b',
              i < 13 && !(kind === 'title' && i < 2) && 'border-r',
              inside ? 'border-b-black' : 'border-b-[#d4d4d4]',
              inside && kind !== 'title' ? 'border-r-black' : 'border-r-[#d4d4d4]',
              kind === 'title' && 'font-bold',
              kind === 'title' && i === 2 && 'bg-[#c6c6c6]',
              kind === 'heading' && 'text-center pr-0.5',
              kind === 'heading' && inside && '[border-bottom-style:double] [border-bottom-width:3px]',
              kind === 'heading' && inside && (isSelected(i) ? 'bg-[#a9b4c0]' : 'bg-[#ddebf7]'),
              !kind && isSelected(i) && 'bg-[#c6c6c6]'
            )}
          >
            {i === 10 && !kind && text ? (
              <a href={`mailto:${text}`} className="text-[#0563c1] underline underline-offset-[3px]">{text}</a>
            ) : (
              text
            )}
          </td>
        );
      })}
    </tr>
  );
}

function Sheet() {
  return (
    <main className="flex-1 min-h-0 flex border-b border-[#9f9f9f]">
      <div className="relative flex-1 min-w-0 overflow-hidden bg-white border-r border-[#9f9f9f]">
        <table className="w-full table-fixed border-separate border-spacing-0 text-[15px] leading-[22px] font-light text-black [font-feature-settings:normal]">
          <colgroup>
            <col style={{ width: 29 }} />
            {COLUMNS.map((col, i) => (
              <col key={i} style={col.width ? { width: col.width } : undefined} />
            ))}
          </colgroup>
          <thead>
            <tr className="h-6">
              <th className="p-0 bg-[#e6e6e6] border-r border-b border-[#b5b5b5]" aria-label="すべて選択">
                <Svg w={17} h={17} className="ml-2 mt-0.5"><path d="M17 0v17H0z" fill="#b4b4b4" /></Svg>
              </th>
              {COLUMNS.map((col, i) => (
                <th
                  key={i}
                  scope="col"
                  className={clsx(
                    'p-0 pb-px font-normal border-b border-b-[#9f9f9f] border-r-[#b5b5b5]',
                    i < 13 && 'border-r',
                    isSelected(i) ? 'bg-[#d3f0e0] text-[#217346]' : 'bg-[#e6e6e6] text-[#222]'
                  )}
                >
                  {col.id}
                </th>
              ))}
            </tr>
          </thead>
          <tbody>
            <SheetRow number={1} cells={['〇△物産顧客名簿']} kind="title" />
            <SheetRow number={2} cells={HEADINGS} kind="heading" />
            {CUSTOMERS.map((cells, i) => (
              <SheetRow key={i} number={i + 3} cells={cells} />
            ))}
          </tbody>
        </table>
        {/* selection outline around columns B:C */}
        <div className="absolute left-[99px] top-[22px] -bottom-1 w-[117px] border-2 border-[#217346] shadow-[inset_0_0_0_1px_white] pointer-events-none">
          <span className="absolute -right-[3px] -top-px w-[5px] h-[5px] bg-[#217346]" />
        </div>
      </div>
      <div className="w-[21px] px-[3px] flex flex-col">
        <button type="button" aria-label="上へスクロール" className="mt-px h-4 bg-white border border-[#ababab] flex items-center justify-center">
          <Svg w={8} h={4}><path d="M0 4h8L4 0z" fill="#666" /></Svg>
        </button>
        <div className="flex-1 bg-[#dadada]">
          <div className="h-[68%] bg-white border border-[#ababab]" />
        </div>
        <button type="button" aria-label="下へスクロール" className="h-[15px] bg-white border border-[#ababab] flex items-center justify-center">
          <Svg w={8} h={4}><path d="M0 0h8L4 4z" fill="#666" /></Svg>
        </button>
      </div>
    </main>
  );
}

function SheetTabs() {
  return (
    <div className="h-[27px] shrink-0 flex items-start pr-[18px]">
      <div className="w-[100px] h-[27px] flex items-center justify-center gap-[23px]">
        <button type="button" aria-label="前のシート"><Svg w={5} h={8}><path d="M5 0L0 4l5 4z" fill="#bdbdbd" /></Svg></button>
        <button type="button" aria-label="次のシート"><Svg w={5} h={8}><path d="M0 0l5 4-5 4z" fill="#bdbdbd" /></Svg></button>
      </div>
      <button type="button" className="w-[128px] h-[25px] -mt-px bg-white text-[#217346] text-[13px] leading-5 border-x border-[#ababab] border-b-2 border-b-[#217346] whitespace-nowrap">
        〇△物産顧客名簿
      </button>
      <button type="button" aria-label="新しいシート" className="ml-8 mt-[5px]">
        <Svg w={17} h={17}>
          <circle cx="8.500" cy="8.500" r="7.500" stroke="#777" />
          <path d="M8.500 4.500v8M4.500 8.500h8" stroke="#777" strokeWidth="1.800" />
        </Svg>
      </button>
      <div className="ml-auto mt-1.5 h-[15px] flex w-[530px]">
        <Svg w={18} h={15}><path d="M2 1v2M2 6v2M2 11v2" stroke="#aaa" strokeWidth="2" /></Svg>
        <button type="button" aria-label="左へスクロール" className="w-[15px] bg-white border border-[#ababab] flex items-center justify-center">
          <Svg w={4} h={8}><path d="M4 0v8L0 4z" fill="#555" /></Svg>
        </button>
        <div className="flex-1 bg-[#dadada] mr-0.5">
          <div className="h-full w-[92%] bg-white border border-[#ababab]" />
        </div>
        <button type="button" aria-label="右へスクロール" className="w-[15px] bg-white border border-[#ababab] flex items-center justify-center">
          <Svg w={4} h={8}><path d="M0 0v8l4-4z" fill="#555" /></Svg>
        </button>
      </div>
    </div>
  );
}

function StatusBar() {
  return (
    <footer className="h-[22px] shrink-0 flex items-center bg-[#f3f2f1] border-t border-[#c8c6c4] text-xs text-[#444] pl-2 pr-2">
      <span>準備完了</span>
      <button type="button" aria-label="マクロの記録" className="ml-[19px]">
        <Svg w={14} h={13}>
          <path d="M6 1.500h7.500v11H1.500V6M6 4h7" stroke="#555" />
          <circle cx="3.500" cy="3" r="2.800" fill="#555" />
          <path d="M3.500 7.500h2M7 7.500h2M10.500 7.500h1.500M3.500 10h2M7 10h2M10.500 10h1.500" stroke="#555" />
        </Svg>
      </button>
      <span className="ml-auto mr-[18px]">データの個数: 48</span>
      <button type="button" aria-label="標準" className="w-[38px] h-[21px] bg-[#c8c6c4] flex items-center justify-center">
        <Svg w={13} h={13}><path d="M.5 .5h12v12H.5zM4.500 0v13M8.500 0v13M0 4.500h13M0 8.500h13" stroke="#666" /></Svg>
      </button>
      <button type="button" aria-label="ページ レイアウト表示" className="w-[38px] h-[21px] flex items-center justify-center">
        <Svg w={14} h={13}><path d="M.5 .5h13v12H.5zM3.500 2.500h7v8h-7zM5 4.500h4M5 6.500h4M5 8.500h4" stroke="#666" /></Svg>
      </button>
      <button type="button" aria-label="改ページ プレビュー" className="w-[38px] h-[21px] flex items-center justify-center">
        <Svg w={14} h={13}><path d="M.5 .5h13v12H.5zM4.500 1v6.500h6V1M7.500 1v6.500" stroke="#666" /></Svg>
      </button>
      <button type="button" aria-label="縮小" className="ml-1"><Svg w={7} h={7}><path d="M0 3.500h6" stroke="#555" strokeWidth="2" /></Svg></button>
      <input
        type="range"
        min="0"
        max="100"
        defaultValue="50"
        aria-label="ズーム"
        className="mx-1 w-[100px] h-4 appearance-none bg-transparent [&::-webkit-slider-runnable-track]:h-px [&::-webkit-slider-runnable-track]:bg-[#a0a0a0] [&::-webkit-slider-thumb]:appearance-none [&::-webkit-slider-thumb]:w-[5px] [&::-webkit-slider-thumb]:h-[11px] [&::-webkit-slider-thumb]:-mt-[5px] [&::-webkit-slider-thumb]:bg-[#666]"
      />
      <button type="button" aria-label="拡大"><Svg w={7} h={7}><path d="M0 3.500h7M3.500 0v7" stroke="#555" strokeWidth="2" /></Svg></button>
      <span className="ml-3">100%</span>
    </footer>
  );
}

export default function App() {
  return (
    <div className="relative h-screen flex flex-col overflow-hidden bg-[#e6e6e6] font-['Noto_Sans_CJK_JP',sans-serif] [font-feature-settings:'palt']">
      <TitleBar />
      <div className="shrink-0 bg-[#f3f2f1] relative z-10">
        <RibbonTabs />
        <Ribbon />
      </div>
      <FormulaBar />
      <Sheet />
      <SheetTabs />
      <StatusBar />

      {/* step markers */}
      <Callout className="left-[153px] top-[137px]">①ドラッグして選択</Callout>
      <Callout className="left-[130px] top-[12px]">②</Callout>
      <Callout className="left-[1026px] top-[68px]">③</Callout>
      <Callout className="left-[1188px] top-[258px]">④</Callout>
      <Callout className="left-[864px] top-[328px]">⑤</Callout>
      <Svg w={92} h={40} className="absolute z-40 left-[114px] top-[190px] pointer-events-none [filter:drop-shadow(1px_2px_2px_rgba(0,0,0,0.35))]">
        <path d="M2 17.500l53-7L51.500 3l34 14.500L51.500 32l3.500-7.500z" fill="#ff0000" />
      </Svg>
    </div>
  );
}
